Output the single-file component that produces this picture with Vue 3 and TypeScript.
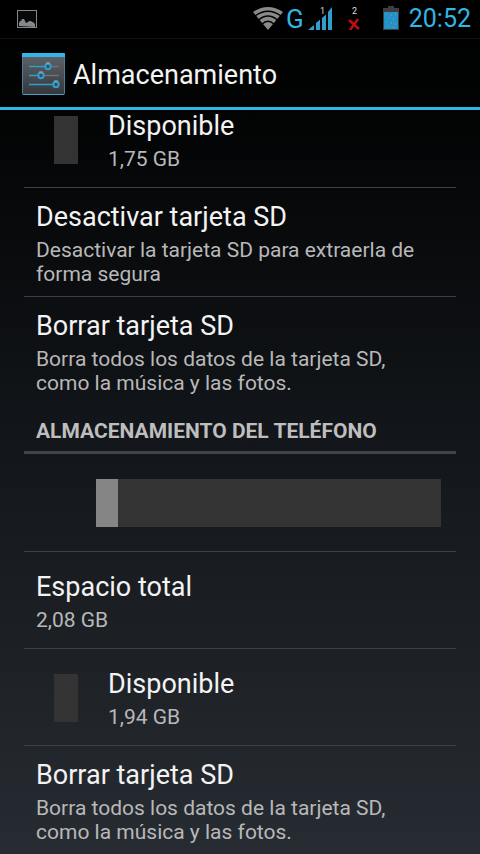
<script setup lang="ts">
interface Row {
  id: string
  title: string
  summary: string
  swatch?: boolean
  action?: boolean
  last?: boolean
}

const cardRows: Row[] = [
  { id: 'sd-free', title: 'Disponible', summary: '1,75 GB', swatch: true },
  { id: 'sd-unmount', title: 'Desactivar tarjeta SD', summary: 'Desactivar la tarjeta SD para extraerla de forma segura', action: true },
  { id: 'sd-erase', title: 'Borrar tarjeta SD', summary: 'Borra todos los datos de la tarjeta SD, como la música y las fotos.', action: true, last: true },
]

const phoneRows: Row[] = [
  { id: 'phone-total', title: 'Espacio total', summary: '2,08 GB' },
  { id: 'phone-free', title: 'Disponible', summary: '1,94 GB', swatch: true },
  { id: 'phone-erase', title: 'Borrar tarjeta SD', summary: 'Borra todos los datos de la tarjeta SD, como la música y las fotos.', action: true, last: true },
]

const usedPercent = 6.4
</script>

<template>
  <div class="screen">
    <div class="status">
      <svg class="picture" viewBox="0 0 20 18" width="20" height="18" aria-hidden="true">
        <rect x="0.5" y="0.5" width="19" height="17" fill="#08090a" stroke="#85878a" />
        <path d="M2 16v-3l1-2h1l1-2h2l1 2 1 2 2-1 1-1h2l1 1h1l2 2v3z" fill="#85878a" />
      </svg>
      <div class="indicators">
        <svg class="wifi" viewBox="0 0 30 23" width="30" height="23" aria-hidden="true">
          <path d="M0 5Q15-5 30 5L15 23Z" fill="#8a8a8a" />
          <path d="M2 9Q15-.5 28 9M5.500 13Q15 5 24.500 13M9 17Q15 11.500 21 17" fill="none" stroke="#000" stroke-width="1.300" />
        </svg>
        <span class="network">G</span>
        <svg class="signal" viewBox="0 0 24 24" width="24" height="24" aria-hidden="true">
          <path d="M0 24L6 19V24ZM8 24V17L12 13.500V24ZM14 24V12L18 8.500V24ZM20 24V6L24 1V24Z" fill="#2f9fcf" />
          <text class="slot" x="12" y="8">1</text>
        </svg>
        <svg class="nosim" viewBox="0 0 12 24" width="12" height="24" aria-hidden="true">
          <text class="slot" x="4" y="8">2</text>
          <path d="M1 14L11 23M10 13L2 24" fill="none" stroke="#b90f12" stroke-width="2.600" />
        </svg>
        <svg class="battery" viewBox="0 0 16 24" width="16" height="24" aria-hidden="true">
          <path d="M5 0H11V2H16V24H0V2H5Z" fill="#3c3e40" />
          <path d="M1 6H15V23H1Z" fill="#2292c7" />
          <path d="M3 8h1M8 9h1M12 8h1M5 12h1M10 13h1M3 16h1M8 17h1M12 18h1M5 20h1M10 21h1" stroke="#8d9eaa" />
        </svg>
        <time class="clock" datetime="20:52">20:52</time>
      </div>
    </div>

    <header class="bar">
      <svg class="logo" viewBox="0 0 44 42" width="44" height="42" aria-hidden="true">
        <defs>
          <linearGradient id="tile" x1="0" y1="0" x2="0" y2="1">
            <stop offset="0" stop-color="#606367" />
            <stop offset="1" stop-color="#34373b" />
          </linearGradient>
        </defs>
        <rect x="0.500" y="0.500" width="42" height="41" rx="1" fill="url(#tile)" stroke="#43809e" />
        <path d="M0 4V1Q0 0 1 0H42Q43 0 43 1V4Z" fill="#33b5e5" />
        <path d="M1 41.500H42" stroke="#49a3c8" />
        <path d="M30 13.500H37M22 22.500H37" stroke="#6f7376" stroke-width="1.500" />
        <path d="M7 13.500H24M7 22.500H16M7 31.500H31" stroke="#2f9fd0" stroke-width="1.700" />
        <g fill="#444a50" stroke="#2f9fd0" stroke-width="2">
          <circle cx="26" cy="13.500" r="2.700" />
          <circle cx="19" cy="22.500" r="2.700" />
          <circle cx="34" cy="31.500" r="2.700" />
        </g>
        <path d="M24 10h4M17 19h4M32 28h4" stroke="#a4adb3" />
      </svg>
      <h1>Almacenamiento</h1>
    </header>

    <main class="viewport">
      <div class="list">
        <section>
          <component
            :is="row.action ? 'button' : 'div'"
            v-for="row in cardRows"
            :key="row.id"
            class="row"
            :class="{ last: row.last }"
            :type="row.action ? 'button' : undefined"
          >
            <span v-if="row.swatch" class="swatch"></span>
            <span class="text">
              <span class="title">{{ row.title }}</span>
              <span class="summary">{{ row.summary }}</span>
            </span>
          </component>
        </section>

        <section>
          <h2>Almacenamiento del teléfono</h2>
          <div class="usage">
            <div class="track">
              <div class="used" :style="{ width: usedPercent + '%' }"></div>
            </div>
          </div>
          <component
            :is="row.action ? 'button' : 'div'"
            v-for="row in phoneRows"
            :key="row.id"
            class="row"
            :class="{ last: row.last }"
            :type="row.action ? 'button' : undefined"
          >
            <span v-if="row.swatch" class="swatch"></span>
            <span class="text">
              <span class="title">{{ row.title }}</span>
              <span class="summary">{{ row.summary }}</span>
            </span>
          </component>
        </section>
      </div>
    </main>
  </div>
</template>

<style>
body {
  margin: 0;
  background: #000;
}
</style>

<style scoped>
.screen {
  display: flex;
  flex-direction: column;
  min-height: 100vh;
  box-sizing: border-box;
  color: #f3f3f3;
  font-family: Roboto, "Liberation Sans", sans-serif;
  background: linear-gradient(#000 0, #020303 12%, #111418 48%, #272c32 100%);
}
.status {
  display: flex;
  align-items: center;
  justify-content: space-between;
  height: 38px;
  padding: 0 9px 0 17px;
  background: #000;
  border-bottom: 1px solid #111;
}
.indicators {
  display: flex;
  align-items: center;
  padding-bottom: 2px;
  color: #33b5e5;
}
.network {
  margin: 0 4px 0 3px;
  padding-top: 2px;
  font-size: 26px;
  line-height: 32px;
}
.slot {
  fill: #ddd;
  font-size: 9px;
}
.nosim {
  margin: 0 23px 0 16px;
}
.clock {
  margin-left: 10px;
  padding-top: 2px;
  font-size: 25px;
  line-height: 32px;
}
.bar {
  display: flex;
  align-items: center;
  gap: 7px;
  height: 66px;
  padding: 2px 22px 0;
  border-bottom: 3px solid #33b5e5;
}
h1 {
  margin: 0;
  padding-top: 2px;
  font-size: 27px;
  font-weight: 400;
  line-height: 36px;
}
.viewport {
  flex: 1;
  overflow: hidden;
}
/* The list rests slightly scrolled under the action bar. */
.list {
  margin-top: -19px;
  padding: 0 24px;
}
.row {
  display: flex;
  align-items: center;
  box-sizing: border-box;
  width: 100%;
  min-height: 97px;
  padding: 11px 24px 10px 12px;
  border: 0;
  border-bottom: 1px solid #3e4044;
  background: none;
  color: inherit;
  font: inherit;
  text-align: left;
}
.row.last {
  border-bottom: 0;
}
.swatch {
  flex: none;
  width: 24px;
  height: 48px;
  margin: 0 30px 0 18px;
  background: #333;
}
.text {
  display: flex;
  flex-direction: column;
  gap: 3px;
}
.title {
  font-size: 27px;
  line-height: 36px;
}
.summary {
  color: #b8b8b9;
  font-size: 21px;
  line-height: 24px;
}
h2 {
  margin: 0;
  padding: 14px 12px 8px;
  border-bottom: 3px solid #424347;
  color: #bebebf;
  font-size: 21px;
  font-weight: 700;
  line-height: 24px;
  text-transform: uppercase;
}
.usage {
  padding: 25px 15px 24px 72px;
  border-bottom: 1px solid #3e4044;
}
.track {
  height: 48px;
  background: #333;
}
.used {
  height: 100%;
  background: #858585;
}
</style>
